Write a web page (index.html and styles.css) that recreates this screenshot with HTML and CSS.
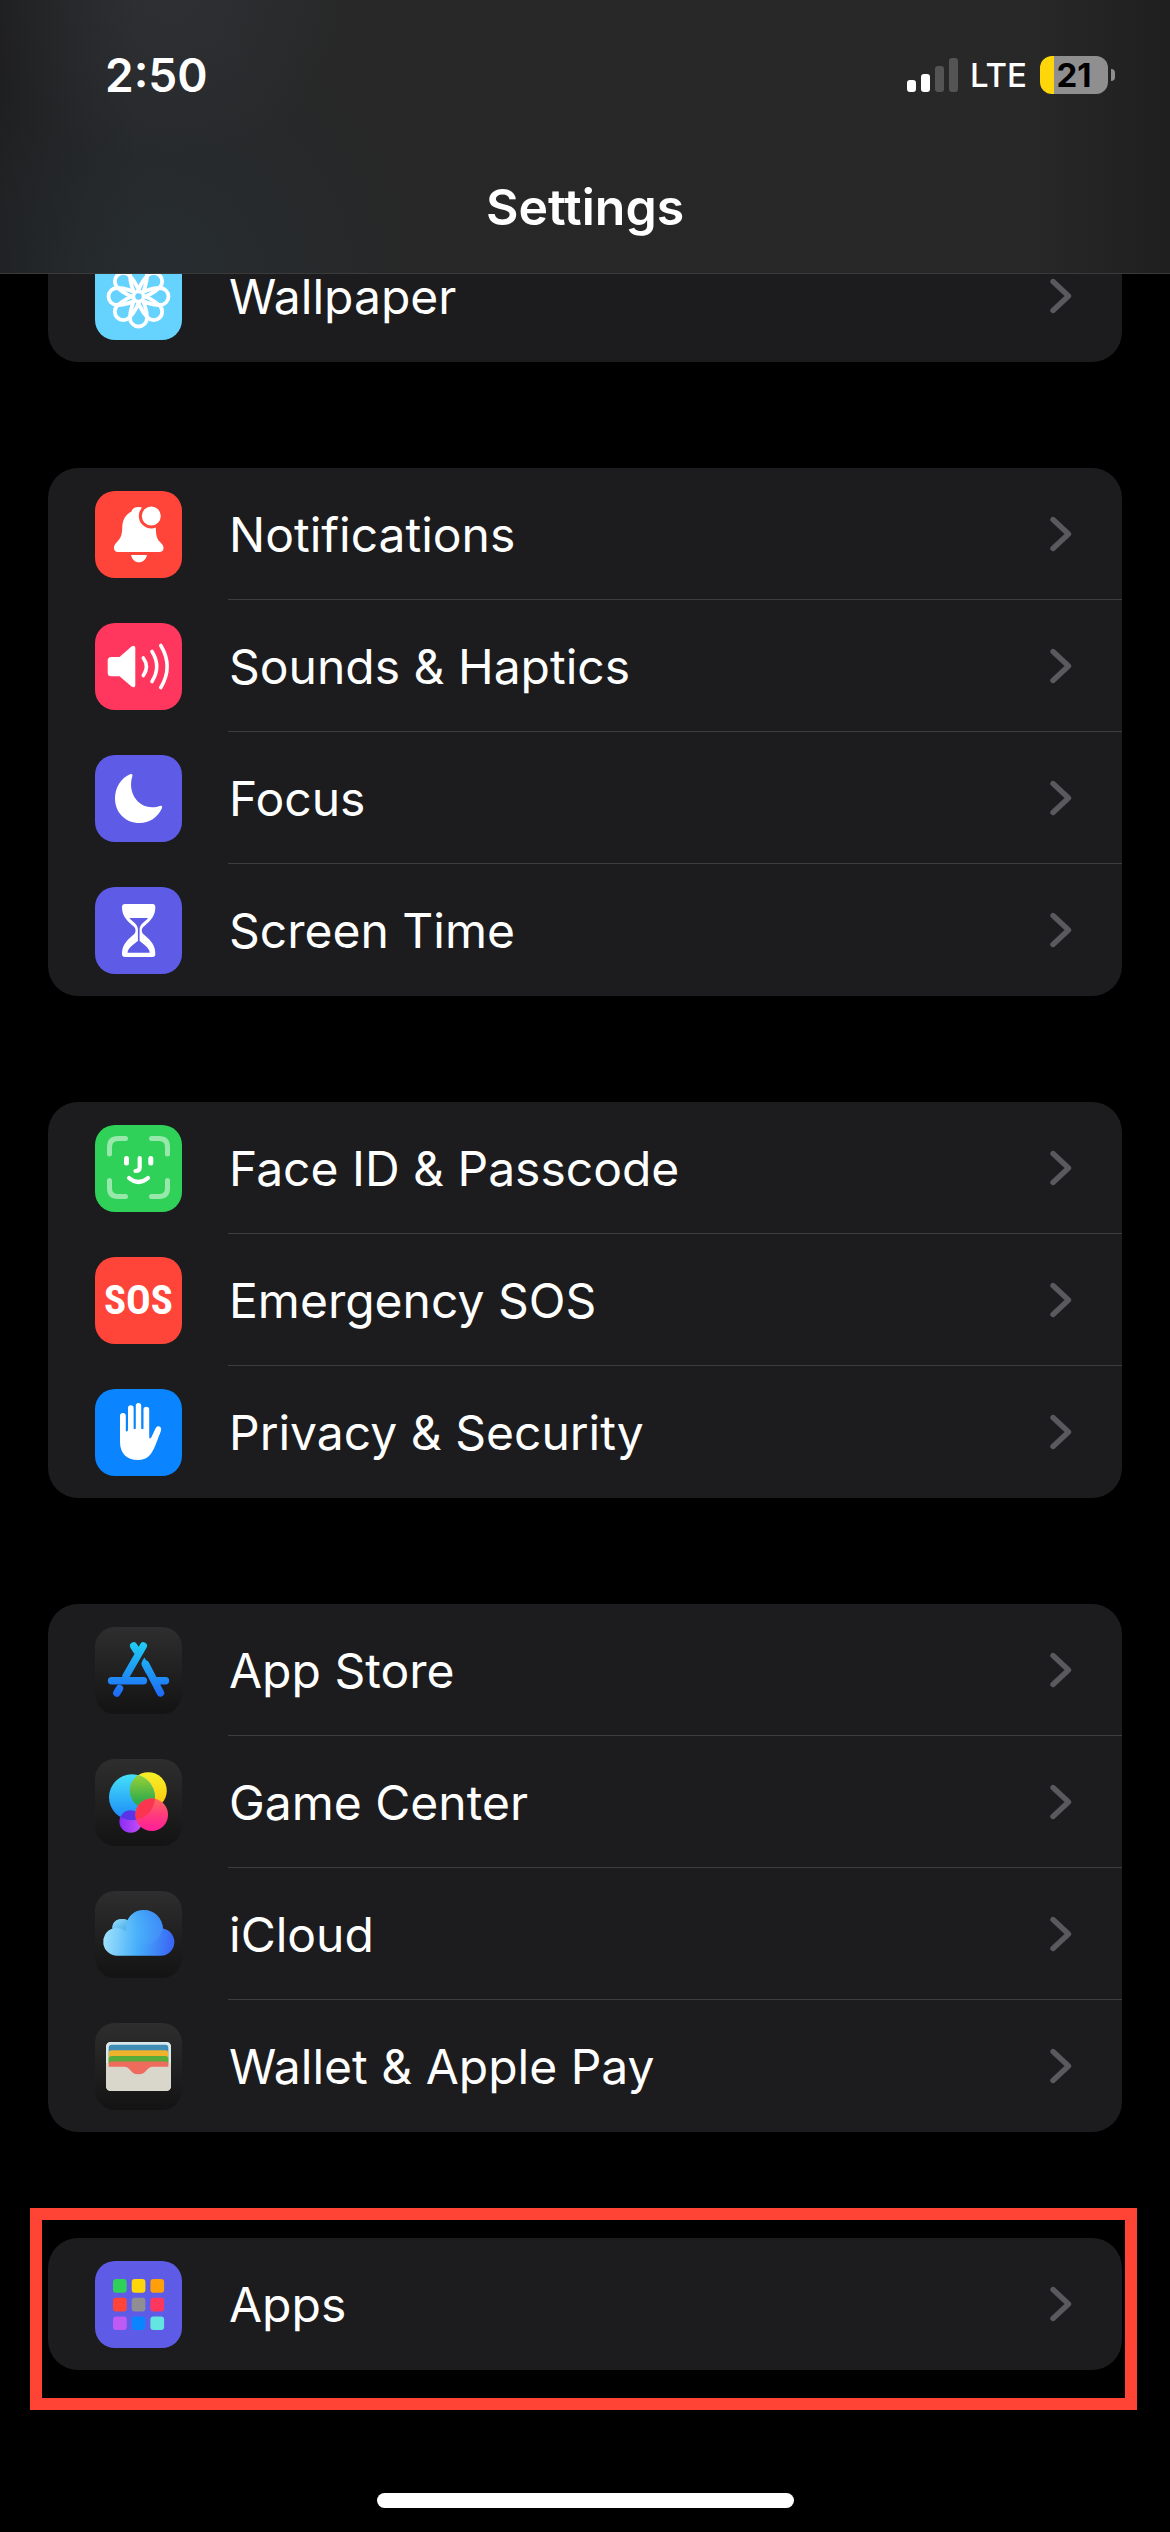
FILE: index.html
```html
<!DOCTYPE html>
<html lang="en">
<head>
<meta charset="utf-8">
<meta name="viewport" content="width=device-width, initial-scale=1">
<title>Settings</title>
<link rel="stylesheet" href="styles.css">
</head>
<body>
<svg class="defs" aria-hidden="true">
  <defs>
    <symbol id="chevron" viewBox="0 0 22 36">
      <path d="M3 3.5 18.500 18 3 32.500" fill="none" stroke="currentColor" stroke-width="5.400" stroke-linecap="round" stroke-linejoin="round"/>
    </symbol>
  </defs>
</svg>

<header class="header">
  <div class="status">
    <time class="clock">2:50</time>
    <div class="indicators">
      <svg class="signal" viewBox="0 0 51 34" role="img" aria-label="Signal: 2 of 4 bars">
        <rect x="0" y="22" width="9" height="12" rx="3" fill="#fff"/>
        <rect x="14" y="16" width="9" height="18" rx="3" fill="#fff"/>
        <rect x="28" y="8" width="9" height="26" rx="3" fill="#545454"/>
        <rect x="42" y="0" width="9" height="34" rx="3" fill="#545454"/>
      </svg>
      <span class="network">LTE</span>
      <div class="battery"><span class="battery-level">21</span></div>
    </div>
  </div>
  <h1 class="title">Settings</h1>
</header>

<main class="content">
  <ul class="group">
    <li><a class="row" href="#wallpaper">
      <svg class="icon" viewBox="0 0 87 87" aria-hidden="true">
        <rect width="87" height="87" rx="20" fill="#66d3ff"/>
        <g fill="none" stroke="#fff" stroke-width="3.800" transform="translate(43.500 43.500)">
          <path id="petal" d="M0 5C-4-2-8.500-13-8.500-21.500A8.500 8.500 0 0 1 8.500-21.500C8.500-13 4-2 0 5Z"/>
          <use href="#petal" transform="rotate(45)"/><use href="#petal" transform="rotate(90)"/>
          <use href="#petal" transform="rotate(135)"/><use href="#petal" transform="rotate(180)"/>
          <use href="#petal" transform="rotate(225)"/><use href="#petal" transform="rotate(270)"/>
          <use href="#petal" transform="rotate(315)"/>
          <circle r="4.500" fill="#66d3ff" stroke-width="2.500"/>
        </g>
      </svg>
      <span class="label">Wallpaper</span><svg class="chevron" aria-hidden="true"><use href="#chevron"/></svg></a></li>
  </ul>

  <ul class="group">
    <li><a class="row" href="#notifications">
      <svg class="icon" viewBox="0 0 87 87" aria-hidden="true">
        <rect width="87" height="87" rx="20" fill="#ff453a"/>
        <path fill="#fff" d="M43.500 16C39.500 16 37 18 36.500 20.500 30.500 23.500 27.500 29 27.300 36 27 44 26 47 22 51 20 53 19 54.500 19 57 19 59.500 20.500 61 23 61H64C67 61 68.500 59.500 68.500 57 68.500 54.500 67 53 65 51 61.500 47.500 61 44 60.800 36 60 29 57 23.500 50.500 20.500 50 18 47.500 16 43.500 16ZM36 64H52C51 68.500 48 71.300 44 71.300S37 68.500 36 64Z"/>
        <circle cx="56.300" cy="25" r="12.500" fill="#ff453a"/><circle cx="56.300" cy="25" r="9.500" fill="#fff"/>
      </svg>
      <span class="label">Notifications</span><svg class="chevron" aria-hidden="true"><use href="#chevron"/></svg></a></li>
    <li><a class="row" href="#sounds">
      <svg class="icon" viewBox="0 0 87 87" aria-hidden="true">
        <rect width="87" height="87" rx="20" fill="#ff375f"/>
        <path fill="#fff" d="M16 34H24.500L36.500 23.500C38.500 22 40.300 22.800 40.300 25V62C40.300 64.300 38.500 65 36.500 63.500L24.500 53.300H16C14 53.300 12.700 52 12.700 50V37.300C12.700 35.300 14 34 16 34Z"/>
        <g fill="none" stroke="#fff" stroke-width="3.600" stroke-linecap="round">
          <path d="M48.300 35Q54.500 43.500 48.300 52.500"/><path d="M57 28.500Q66.500 43.500 57 58.500"/><path d="M65.800 22.500Q78.500 43.500 65.800 64.500"/>
        </g>
      </svg>
      <span class="label">Sounds &amp; Haptics</span><svg class="chevron" aria-hidden="true"><use href="#chevron"/></svg></a></li>
    <li><a class="row" href="#focus">
      <svg class="icon" viewBox="0 0 87 87" aria-hidden="true">
        <rect width="87" height="87" rx="20" fill="#5e5ce6"/>
        <path fill="#fff" d="M35 19.200C37 18.300 38 19.500 37.300 21.500 32.500 36.500 42 52 57 52.300 60.500 52.300 62.500 51.800 64.800 51 66.800 50.300 67.700 51.500 66.800 53.500 62.500 62.500 54.500 68 44.500 68 30.500 68 20 57.500 20 43.500 20 32.500 26 23 35 19.200Z"/>
      </svg>
      <span class="label">Focus</span><svg class="chevron" aria-hidden="true"><use href="#chevron"/></svg></a></li>
    <li><a class="row" href="#screen-time">
      <svg class="icon" viewBox="0 0 87 87" aria-hidden="true">
        <rect width="87" height="87" rx="20" fill="#5e5ce6"/>
        <path fill="#fff" d="M30 17H57.500C59.500 17 60.300 18.200 60.300 20 60.300 28 57 32.500 50 38.500 47.500 40.500 46.800 41.500 46.800 43.500S47.500 46.500 50 48.500C57 54.500 60.300 59 60.300 67 60.300 69 59.500 70 57.500 70H30C28 70 27 69 27 67 27 59 30.500 54.500 37.500 48.500 40 46.500 40.500 45.500 40.500 43.500S40 40.500 37.500 38.500C30.500 32.500 27 28 27 20 27 18.200 28 17 30 17Z"/>
        <path fill="#5e5ce6" d="M34.500 31H53C51 34 44.800 37 44.600 42V54C47 56 54.500 60.500 54.800 65.800H32.500C32.800 60.500 40.500 56 42.900 54V42C42.700 37 36.500 34 34.500 31Z"/>
      </svg>
      <span class="label">Screen Time</span><svg class="chevron" aria-hidden="true"><use href="#chevron"/></svg></a></li>
  </ul>

  <ul class="group">
    <li><a class="row" href="#face-id">
      <svg class="icon" viewBox="0 0 87 87" aria-hidden="true">
        <rect width="87" height="87" rx="20" fill="#30d158"/>
        <g fill="none" stroke="#fff" stroke-linecap="round" stroke-linejoin="round">
          <path stroke="#98e8ac" stroke-width="5" d="M14.500 29V22Q14.500 13.500 23 13.500H30.500M56.500 13.500H64Q72.500 13.500 72.500 22V29M14.500 55.500V63Q14.500 71.500 23 71.500H30.500M56.500 71.500H64Q72.500 71.500 72.500 63V55.500"/>
          <path stroke-width="5" d="M31.500 33.500V38M55.800 33.500V38"/>
          <path stroke-width="4.200" d="M44.700 33V42.500Q44.700 46 40.500 46M34 53Q43.500 61 53 53"/>
        </g>
      </svg>
      <span class="label">Face ID &amp; Passcode</span><svg class="chevron" aria-hidden="true"><use href="#chevron"/></svg></a></li>
    <li><a class="row" href="#sos">
      <span class="icon icon-sos" aria-hidden="true">SOS</span>
      <span class="label">Emergency SOS</span><svg class="chevron" aria-hidden="true"><use href="#chevron"/></svg></a></li>
    <li><a class="row" href="#privacy">
      <svg class="icon" viewBox="0 0 87 87" aria-hidden="true">
        <rect width="87" height="87" rx="20" fill="#0a84ff"/>
        <path fill="#fff" d="M25 27A2.900 2.900 0 0 1 30.800 27V42Q31.900 43.500 33 41V19A2.800 2.800 0 0 1 38.600 19V39.500Q39.700 41 40.800 39.500V16.700A2.700 2.700 0 0 1 46.200 16.700V39.500Q47.400 41 48.500 39.500V20.500A2.800 2.800 0 0 1 54.200 20.500V48.500Q55 50.500 56.500 48L60.500 39.500C61.500 37.300 63 36.800 64.500 37.500S66.600 40 65.800 42.300L60.500 56C56.500 66 52 71 43 71 31.500 71 25 64 25 53Z"/>
      </svg>
      <span class="label">Privacy &amp; Security</span><svg class="chevron" aria-hidden="true"><use href="#chevron"/></svg></a></li>
  </ul>

  <ul class="group">
    <li><a class="row" href="#app-store">
      <svg class="icon icon-dark" viewBox="0 0 87 87" aria-hidden="true">
        <defs><linearGradient id="store" gradientUnits="userSpaceOnUse" x1="0" y1="15" x2="0" y2="70"><stop stop-color="#1fcdf5"/><stop offset="1" stop-color="#1f68f5"/></linearGradient></defs>
        <g fill="none" stroke="url(#store)" stroke-width="7.400" stroke-linecap="round">
          <path d="M48.300 19 31 49M38.700 19 41.500 23.500"/>
          <path d="M50.500 37 65.500 66"/><path d="M16.500 53.700 48.500 53.701M62 53.700 70.500 53.701"/><path d="M24.500 61.500 21.800 66"/>
        </g>
        <path fill="url(#store)" d="M49.500 30.500 55 41 51 46.500 46.800 38.500C46 36 47 33.500 49.500 30.500Z"/>
      </svg>
      <span class="label">App Store</span><svg class="chevron" aria-hidden="true"><use href="#chevron"/></svg></a></li>
    <li><a class="row" href="#game-center">
      <svg class="icon icon-dark" viewBox="0 0 87 87" aria-hidden="true">
        <defs>
          <linearGradient id="gc-blue" x2="0" y2="1"><stop stop-color="#45e0f8"/><stop offset="1" stop-color="#1b87f8"/></linearGradient>
          <linearGradient id="gc-yellow" x2="0" y2="1"><stop stop-color="#f4f029"/><stop offset="1" stop-color="#ffc40c"/></linearGradient>
          <linearGradient id="gc-green" x2="0" y2="1"><stop stop-color="#a4d432"/><stop offset=".8" stop-color="#2fac4d"/></linearGradient>
          <linearGradient id="gc-pink" x2="0" y2="1"><stop stop-color="#ff6a5c"/><stop offset=".5" stop-color="#ff3b7c"/><stop offset="1" stop-color="#ff1e9a"/></linearGradient>
          <linearGradient id="gc-purple" x2="1" y2="0"><stop stop-color="#8a2cf5"/><stop offset="1" stop-color="#c650f6"/></linearGradient>
          <clipPath id="gc-clip"><circle cx="37" cy="38.300" r="23"/></clipPath>
        </defs>
        <circle cx="35.700" cy="62.500" r="11.300" fill="url(#gc-purple)"/>
        <circle cx="53.300" cy="31.700" r="18.500" fill="url(#gc-yellow)"/>
        <circle cx="37" cy="38.300" r="23" fill="url(#gc-blue)"/>
        <g clip-path="url(#gc-clip)"><circle cx="53.300" cy="31.700" r="18.500" fill="url(#gc-green)"/><circle cx="35.700" cy="62.500" r="11.300" fill="#5a35e8"/></g>
        <circle cx="56.700" cy="55.800" r="16.300" fill="url(#gc-pink)"/>
        <g clip-path="url(#gc-clip)"><circle cx="56.700" cy="55.800" r="16.300" fill="#fb3550"/></g>
      </svg>
      <span class="label">Game Center</span><svg class="chevron" aria-hidden="true"><use href="#chevron"/></svg></a></li>
    <li><a class="row" href="#icloud">
      <svg class="icon icon-dark" viewBox="0 0 87 87" aria-hidden="true">
        <defs>
          <linearGradient id="cloud" gradientUnits="userSpaceOnUse" x1="8" y1="42" x2="79" y2="50"><stop stop-color="#a2e3fb"/><stop offset=".5" stop-color="#45aefa"/><stop offset="1" stop-color="#3a64f5"/></linearGradient>
          <linearGradient id="cloud-big" gradientUnits="userSpaceOnUse" x1="40" y1="52" x2="58" y2="24"><stop stop-color="#5cc4fb" stop-opacity="0"/><stop offset="1" stop-color="#3d92f8"/></linearGradient>
          <linearGradient id="cloud-small" gradientUnits="userSpaceOnUse" x1="20" y1="30" x2="32" y2="46"><stop stop-color="#8ad6f8"/><stop offset=".6" stop-color="#55b4ec"/><stop offset="1" stop-color="#70c9f9" stop-opacity="0"/></linearGradient>
        </defs>
        <path fill="url(#cloud)" d="M22 64.700A14 14 0 0 1 17.500 37.500C17 32 21 28 27 28 29 28 31 28.500 32.500 29.300 35.500 23 41.500 19 48.700 19 59 19 67.500 27 68 37.500A13.700 13.700 0 0 1 65.500 64.700Z"/>
        <path fill="url(#cloud-big)" opacity=".6" d="M32.500 29.300C35.500 23 41.500 19 48.700 19 59 19 67.500 27 68 37.500 66 42 66 44 60 50 50 58 36 52 32 42 30 37 31 33 32.500 29.300Z"/>
        <path fill="url(#cloud-small)" d="M17.500 37.500C17 32 21 28 27 28 29 28 31 28.500 32.500 29.300 31 34 31 38 33 43 28 37 23 35.500 17.500 37.500Z"/>
      </svg>
      <span class="label">iCloud</span><svg class="chevron" aria-hidden="true"><use href="#chevron"/></svg></a></li>
    <li><a class="row" href="#wallet">
      <svg class="icon icon-dark" viewBox="0 0 87 87" aria-hidden="true">
        <rect x="11" y="19" width="65" height="49" rx="5" fill="#d9d6cc"/>
        <path fill="#d8e8ec" d="M11 40V24Q11 19 16 19H71Q76 19 76 24V40Z"/>
        <rect x="13.700" y="21.700" width="59.600" height="20" rx="3" fill="#3f8db5"/>
        <rect x="13.700" y="27.200" width="59.600" height="16" rx="3" fill="#f0b32c"/>
        <rect x="13.700" y="33" width="59.600" height="10" rx="3" fill="#5aad3a"/>
        <rect x="13.700" y="38.500" width="59.600" height="14" rx="3" fill="#ee6b5e"/>
        <path fill="#d9d6cc" d="M11 43.700H29C36 43.700 35 51.300 43.500 51.300S51 43.700 58 43.700H76V63Q76 68 71 68H16Q11 68 11 63Z"/>
      </svg>
      <span class="label">Wallet &amp; Apple Pay</span><svg class="chevron" aria-hidden="true"><use href="#chevron"/></svg></a></li>
  </ul>

  <ul class="group group-highlighted">
    <li><a class="row" href="#apps">
      <svg class="icon" viewBox="0 0 87 87" aria-hidden="true">
        <rect width="87" height="87" rx="20" fill="#5e5ce6"/>
        <rect x="18" y="18" width="13.700" height="13.700" rx="3" fill="#30d158"/><rect x="36.700" y="18" width="13.700" height="13.700" rx="3" fill="#ffd60a"/><rect x="55.400" y="18" width="13.700" height="13.700" rx="3" fill="#ff9f0a"/>
        <rect x="18" y="36.700" width="13.700" height="13.700" rx="3" fill="#ff453a"/><rect x="36.700" y="36.700" width="13.700" height="13.700" rx="3" fill="#8e8e93"/><rect x="55.400" y="36.700" width="13.700" height="13.700" rx="3" fill="#ff375f"/>
        <rect x="18" y="55.400" width="13.700" height="13.700" rx="3" fill="#bf5af2"/><rect x="36.700" y="55.400" width="13.700" height="13.700" rx="3" fill="#0a84ff"/><rect x="55.400" y="55.400" width="13.700" height="13.700" rx="3" fill="#63e6e2"/>
      </svg>
      <span class="label">Apps</span><svg class="chevron" aria-hidden="true"><use href="#chevron"/></svg></a></li>
  </ul>
</main>
<div class="home-indicator"></div>
</body>
</html>
```
FILE: styles.css
```css
* { box-sizing: border-box; }

body {
  margin: 0;
  min-height: 100vh;
  display: flex;
  flex-direction: column;
  background: #000;
  color: #fff;
  font-family: Inter, "Liberation Sans", sans-serif;
}

.defs { position: absolute; width: 0; height: 0; }

.header {
  position: sticky;
  top: 0;
  z-index: 1;
  border-bottom: 1px solid #3a3a3b;
  background:
    radial-gradient(ellipse 200px 160px at 170px 0, rgba(50, 54, 60, .6), transparent),
    radial-gradient(ellipse 260px 260px at 160px 273px, rgba(38, 47, 52, .7), transparent),
    linear-gradient(90deg, #1e1e1f 0, #272727 140px, #282828 calc(100% - 140px), #1f1f1f 100%);
}

.status {
  display: flex;
  justify-content: space-between;
  align-items: center;
  height: 141px;
  padding: 8px 55px 0 105px;
}

.clock { font-size: 46px; font-weight: 600; line-height: 56px; }

.indicators { display: flex; align-items: center; }

.signal { width: 51px; height: 34px; margin-right: 12px; }

.network { font-size: 33px; font-weight: 500; line-height: 40px; margin-right: 13px; }

.battery {
  position: relative;
  display: grid;
  place-items: center;
  width: 68px;
  height: 38px;
  margin-right: 7px;
  border-radius: 12px;
  background: linear-gradient(90deg, #ffd60a 14px, #8f8f8f 14px);
}

.battery::after {
  content: "";
  position: absolute;
  left: 71px;
  top: 13px;
  width: 4px;
  height: 12px;
  border-radius: 0 4px 4px 0;
  background: #8f8f8f;
}

.battery-level { color: #000; font-size: 33px; font-weight: 700; line-height: 38px; }

.title {
  margin: 0;
  font-size: 50px;
  font-weight: 600;
  line-height: 132px;
  text-align: center;
}

.content {
  display: flex;
  flex-direction: column;
  gap: 106px;
  margin-top: -44px;
  padding: 0 48px;
}

.group {
  position: relative;
  margin: 0;
  padding: 0;
  list-style: none;
  border-radius: 30px;
  background: #1c1c1e;
}

.row {
  position: relative;
  display: flex;
  align-items: center;
  height: 132px;
  padding: 0 50px 0 47px;
  color: inherit;
  text-decoration: none;
}

.group li + li .row::before {
  content: "";
  position: absolute;
  top: -1px;
  left: 180px;
  right: 0;
  height: 1px;
  background: #3d3d40;
}

.icon { flex: none; width: 87px; height: 87px; margin-right: 47px; }

.icon-dark { border-radius: 20px; background: linear-gradient(#2e2e2e, #131313); }

.icon-sos {
  display: grid;
  place-items: center;
  border-radius: 20px;
  background: #ff453a;
  font-family: "Roboto Condensed", Roboto, sans-serif;
  font-size: 41px;
  font-weight: 700;
}

.label { flex: 1; padding-top: 2px; font-size: 48px; line-height: 60px; }

.chevron { flex: none; width: 22px; height: 36px; color: #5a5a5e; }

.group-highlighted::after {
  content: "";
  position: absolute;
  inset: -30px -15px -40px -18px;
  border: 12px solid #ff4436;
  pointer-events: none;
}

.home-indicator {
  width: 417px;
  height: 15px;
  margin: auto auto 24px;
  border-radius: 8px;
  background: #fff;
}
```
